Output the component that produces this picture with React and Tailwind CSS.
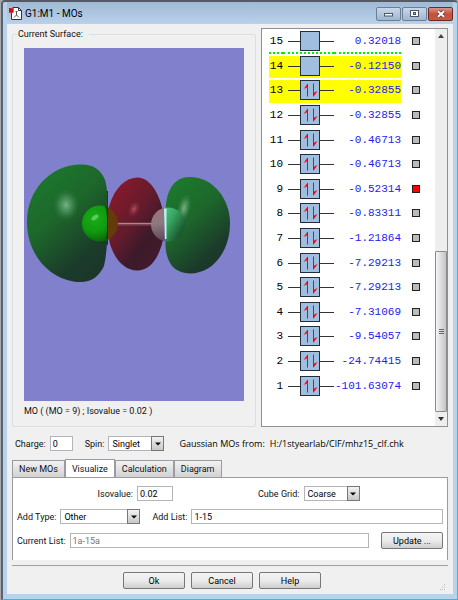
import { useState } from 'react';

const orbitals = [
    { id: 15, energy: '0.32018', electrons: 0, lastVirtual: true },
    { id: 14, energy: '-0.12150', electrons: 0, highlighted: true },
    { id: 13, energy: '-0.32855', electrons: 2, highlighted: true },
    { id: 12, energy: '-0.32855', electrons: 2 },
    { id: 11, energy: '-0.46713', electrons: 2 },
    { id: 10, energy: '-0.46713', electrons: 2 },
    { id: 9, energy: '-0.52314', electrons: 2 },
    { id: 8, energy: '-0.83311', electrons: 2 },
    { id: 7, energy: '-1.21864', electrons: 2 },
    { id: 6, energy: '-7.29213', electrons: 2 },
    { id: 5, energy: '-7.29213', electrons: 2 },
    { id: 4, energy: '-7.31069', electrons: 2 },
    { id: 3, energy: '-9.54057', electrons: 2 },
    { id: 2, energy: '-24.74415', electrons: 2 },
    { id: 1, energy: '-101.63074', electrons: 2 },
];

const tabs = ['New MOs', 'Visualize', 'Calculation', 'Diagram'];

function AppIcon() {
    return (
        <svg className="h-[13px] w-[13px] shrink-0" viewBox="0 0 13 13">
            <path d="M3.5 0.5H9.500L12.500 3.500V12.500H2.500V6" fill="#fff" stroke="#333" strokeWidth="1" />
            <path d="M9.500 0.500V3.500H12.500" fill="none" stroke="#333" strokeWidth="1" />
            <path d="M7.500 4V8L5 10.500M7.500 8L10 10.500M6.500 4.500H8.500" fill="none" stroke="#555" strokeWidth="1" />
            <rect x="0.250" y="1.500" width="4" height="4" fill="#e00" stroke="#a00" strokeWidth="0.500" />
        </svg>
    );
}

function TitleBar() {
    return (
        <header className="flex h-[22px] items-center justify-between bg-linear-to-b from-[#a0bad6] to-[#b9d1ea] pt-px pl-[2px]">
            <div className="flex items-center gap-[3px]">
                <AppIcon />
                <h1 className="text-[10px] leading-4 text-black">G1:M1 - MOs</h1>
            </div>
            <div className="flex gap-px">
                <button type="button" aria-label="Minimize" className="flex h-[14px] w-[25px] items-center justify-center rounded-[2px] border border-[#6d7f95] bg-linear-to-b from-[#c8d8ea] to-[#9fb6d0]">
                    <svg className="h-[7px] w-[11px]" viewBox="0 0 11 7">
                        <rect x="1.5" y="3.5" width="8" height="2.5" fill="#fff" stroke="#4c5666" />
                    </svg>
                </button>
                <button type="button" aria-label="Maximize" className="flex h-[14px] w-[25px] items-center justify-center rounded-[2px] border border-[#6d7f95] bg-linear-to-b from-[#c8d8ea] to-[#9fb6d0]">
                    <svg className="h-[7px] w-[11px]" viewBox="0 0 11 7">
                        <rect x="1.5" y="0.5" width="8" height="6" fill="#fff" stroke="#4c5666" />
                        <rect x="4.5" y="2.5" width="2" height="2" fill="#9fb6d0" stroke="#4c5666" />
                    </svg>
                </button>
                <button type="button" aria-label="Close" className="flex h-[14px] w-[25px] items-center justify-center rounded-[2px] border border-[#6b2a22] bg-linear-to-b from-[#d9968a] via-[#c4503c] to-[#c65a44]">
                    <svg className="h-[8px] w-[10px]" viewBox="0 0 10 8">
                        <path d="M2 1.2L8 6.8M8 1.2L2 6.8" stroke="#5a3a3a" strokeWidth="3.4" />
                        <path d="M2 1.2L8 6.8M8 1.2L2 6.8" stroke="#fff" strokeWidth="1.9" />
                    </svg>
                </button>
            </div>
        </header>
    );
}

function Surface() {
    return (
        <svg className="h-[353px] w-full" viewBox="24 48 220 353" preserveAspectRatio="xMidYMid slice" role="img" aria-label="Molecular orbital surface">
            <defs>
                <linearGradient id="green" x1="0.2" y1="0" x2="0.8" y2="1">
                    <stop offset="0" stopColor="#1c7a2c" />
                    <stop offset="0.4" stopColor="#1d672b" />
                    <stop offset="0.8" stopColor="#1b3b2a" />
                    <stop offset="1" stopColor="#1b352b" />
                </linearGradient>
                <linearGradient id="red" x1="0.15" y1="0.1" x2="0.8" y2="0.9">
                    <stop offset="0" stopColor="#86192b" />
                    <stop offset="0.45" stopColor="#631b2d" />
                    <stop offset="0.75" stopColor="#3b1a2a" />
                    <stop offset="1" stopColor="#421a2b" />
                </linearGradient>
                <radialGradient id="shine">
                    <stop offset="0" stopColor="#78b788" stopOpacity="0.95" />
                    <stop offset="0.5" stopColor="#559866" stopOpacity="0.6" />
                    <stop offset="1" stopColor="#2b7a3a" stopOpacity="0" />
                </radialGradient>
                <radialGradient id="redShine">
                    <stop offset="0" stopColor="#b3505f" />
                    <stop offset="1" stopColor="#7a2434" stopOpacity="0" />
                </radialGradient>
                <radialGradient id="chlorine" cx="0.35" cy="0.35" r="0.75">
                    <stop offset="0" stopColor="#18ae18" />
                    <stop offset="0.5" stopColor="#109a10" />
                    <stop offset="1" stopColor="#075a09" />
                </radialGradient>
                <linearGradient id="fluorineRight" x1="0" y1="0.2" x2="1" y2="0.8">
                    <stop offset="0" stopColor="#61d894" />
                    <stop offset="0.5" stopColor="#39a562" />
                    <stop offset="0.85" stopColor="#1d5f33" />
                    <stop offset="1" stopColor="#1b4f2d" />
                </linearGradient>
                <linearGradient id="fluorineLeft" x1="0" y1="0" x2="0.2" y2="1">
                    <stop offset="0" stopColor="#9b747c" />
                    <stop offset="0.5" stopColor="#8f7780" />
                    <stop offset="1" stopColor="#5e4856" />
                </linearGradient>
                <clipPath id="leftOfNode"><rect x="24" y="48" width="84" height="353" /></clipPath>
                <clipPath id="rightOfNode"><rect x="108" y="48" width="20" height="353" /></clipPath>
                <clipPath id="leftOfLobe"><rect x="140" y="48" width="24.5" height="353" /></clipPath>
                <clipPath id="rightOfLobe"><rect x="165.5" y="48" width="40" height="353" /></clipPath>
            </defs>
            <rect x="24" y="48" width="220" height="353" fill="#8080cc" />
            <path d="M79 164.5C92 163.5 101 169 105 180C107 187 107.5 193 107.5 204V232C107 248 106 257 104 266C99 277 90 283 78 282C50 280 27 255 27 222C27 190 50 166 79 164.5Z" fill="url(#green)" />
            <ellipse cx="66" cy="205" rx="13" ry="16" fill="url(#shine)" />
            <path d="M137 177.500C149 177 159 192 163 211L164 223C164 234 163 242 161 247C156 263 147 270.500 137 270.500C125 270.500 115 260 110 244C108 236 107.500 211 109.500 205C115 188 125 178 137 177.500Z" fill="url(#red)" />
            <ellipse cx="134" cy="209" rx="6" ry="9" fill="url(#redShine)" transform="rotate(25 134 209)" />
            <path d="M190 177C213 177 230 199 230 223C230 251 213 273.500 190 273.500C174 273 166.500 263 165.500 246V211C166 190 174 177 190 177Z" fill="url(#green)" />
            <ellipse cx="184" cy="208" rx="7" ry="15" fill="url(#shine)" transform="rotate(14 184 208)" />
            <rect x="117" y="222.500" width="36" height="3" fill="#7d464e" />
            <rect x="117" y="223" width="36" height="1" fill="#b78486" />
            <circle cx="100" cy="223.500" r="18" fill="url(#chlorine)" clipPath="url(#leftOfNode)" />
            <circle cx="100" cy="223.500" r="18" fill="#663b0b" clipPath="url(#rightOfNode)" />
            <path d="M104.500 206C108 212 108 235 105 241L108 240V206Z" fill="#0a5a0c" />
            <ellipse cx="95" cy="217.500" rx="4" ry="2" fill="#7fd67b" opacity="0.7" transform="rotate(-35 95 217.500)" />
            <circle cx="168" cy="224.500" r="17" fill="url(#fluorineLeft)" clipPath="url(#leftOfLobe)" />
            <circle cx="168" cy="224.500" r="17" fill="url(#fluorineRight)" clipPath="url(#rightOfLobe)" />
            <path d="M164 208.500H166.500V239H165Z" fill="#b9f5ee" />
            <path d="M107.500 191V245" stroke="#123f1c" strokeWidth="1" />
        </svg>
    );
}

function OrbitalBox({ electrons }) {
    return (
        <svg className="block h-5 w-[46px]" viewBox="0 0 46 20" aria-hidden="true">
            <path d="M0 10.500H46" stroke="#333" strokeWidth="1" />
            <rect x="12.500" y="0.500" width="19" height="19" fill="#9fbee0" stroke="#222d3a" />
            {electrons === 2 && (
                <g stroke="#f00" fill="#f00">
                    <path d="M19.500 16.500V4" fill="none" />
                    <path d="M19.800 3.500V7L15.500 9Z" stroke="none" />
                    <path d="M25.500 3.500V16" fill="none" />
                    <path d="M25.200 17V13L29.500 11Z" stroke="none" />
                </g>
            )}
        </svg>
    );
}

function OrbitalTable({ selected, onToggle }) {
    return (
        <table className="h-[371px] flex-1 border-separate border-spacing-x-0 border-spacing-y-[2px] font-['Liberation_Mono',monospace] text-[11px] leading-4">
            <tbody>
                {orbitals.map(orbital => {
                    const cell = orbital.highlighted
                        ? 'border-b-2 border-[#ffff00] bg-[#ffff00]'
                        : orbital.lastVirtual ? 'border-b-2 border-dotted border-[#00ee00]' : 'border-b-2 border-transparent';
                    return (
                        <tr key={orbital.id}>
                            <td className={`w-[14px] p-0 text-right text-black ${cell}`}>{orbital.id}</td>
                            <td className={`w-[51px] p-0 pl-[5px] ${cell}`}>
                                <OrbitalBox electrons={orbital.electrons} />
                            </td>
                            <td className={`p-0 text-right text-[#2222ee] ${cell}`}>{orbital.energy}</td>
                            <td className="w-[34px] border-b-2 border-transparent p-0 pl-[11px]">
                                <input
                                    type="checkbox"
                                    aria-label={`Select orbital ${orbital.id}`}
                                    className="block h-2 w-2 appearance-none border border-[#222] bg-[#bbb] checked:bg-[#f00]"
                                    checked={selected === orbital.id}
                                    onChange={() => onToggle(orbital.id)}
                                />
                            </td>
                        </tr>
                    );
                })}
            </tbody>
        </table>
    );
}

function ScrollBar() {
    return (
        <div className="flex w-3 shrink-0 flex-col bg-[#eeeeee]">
            <button type="button" aria-label="Scroll up" className="flex h-[14px] items-center justify-center">
                <svg className="h-1 w-[6px]" viewBox="0 0 6 4"><path d="M0 4L3 0L6 4Z" fill="#444" /></svg>
            </button>
            <div className="flex-1" />
            <div className="flex h-[161px] flex-col items-center justify-center gap-px rounded-[1px] border border-[#8c8c8c] bg-linear-to-r from-[#f5f5f5] to-[#c4c4c8]">
                <span className="h-px w-[5px] bg-[#666]" />
                <span className="h-px w-[5px] bg-[#666]" />
                <span className="h-px w-[5px] bg-[#666]" />
            </div>
            <button type="button" aria-label="Scroll down" className="flex h-[14px] items-center justify-center">
                <svg className="h-1 w-[6px]" viewBox="0 0 6 4"><path d="M0 0L3 4L6 0Z" fill="#333" /></svg>
            </button>
        </div>
    );
}

function SelectInput({ id, className, value, onChange, options }) {
    return (
        <div className={`relative h-[15px] ${className}`}>
            <select
                id={id}
                value={value}
                onChange={onChange}
                className="block h-full w-full appearance-none border border-[#b4b4bc] bg-white pr-3 pl-[3px] leading-3 text-black"
            >
                {options.map(option => <option key={option}>{option}</option>)}
            </select>
            <span className="pointer-events-none absolute top-0 right-0 flex h-full w-[13px] items-center justify-center border border-[#777] bg-linear-to-b from-[#f2f2f2] to-[#c8c8c8]">
                <svg className="h-1 w-[6px]" viewBox="0 0 6 4"><path d="M0 0.500L3 3.500L6 0.500Z" fill="#000" /></svg>
            </span>
        </div>
    );
}

function TextInput({ className, ...props }) {
    return <input type="text" className={`h-[15px] border border-[#b4b4bc] bg-white px-[2px] leading-3 text-black disabled:text-[#777] ${className}`} {...props} />;
}

function PushButton({ children }) {
    return (
        <button type="button" className="h-[17px] w-[62px] shrink-0 rounded-[2px] border border-[#777] bg-linear-to-b from-[#f4f4f4] via-[#ebebeb] to-[#cfcfcf] leading-3 text-black">
            {children}
        </button>
    );
}

export default function App() {
    const [selected, setSelected] = useState(9);
    const [activeTab, setActiveTab] = useState('Visualize');
    const [charge, setCharge] = useState('0');
    const [spin, setSpin] = useState('Singlet');
    const [isovalue, setIsovalue] = useState('0.02');
    const [cubeGrid, setCubeGrid] = useState('Coarse');
    const [addType, setAddType] = useState('Other');
    const [addList, setAddList] = useState('1-15');

    return (
        <div className="flex min-h-screen bg-[#a5a9ad] pl-px font-['Roboto','Liberation_Sans',sans-serif] text-[9px] leading-3 text-[#111]">
            <div className="flex min-w-0 flex-1 flex-col rounded-t-[4px] border-t-2 border-r border-b border-l-2 border-t-[#555b62] border-r-[#32bfd4] border-b-[#32bfd4] border-l-[#59636d] bg-[#b9d1ea] px-1 pb-[5px]">
                <TitleBar />
                <main className="flex flex-1 flex-col bg-[#f0f0f0] px-[5px] pt-1">
                    <div className="flex gap-[5px]">
                        <fieldset className="min-w-0 flex-1 rounded-[2px] border border-[#d8e0e6] px-[11px] pb-[9px]">
                            <legend className="-ml-[6px] pr-[6px]">Current Surface:</legend>
                            <div className="pt-2">
                                <Surface />
                            </div>
                            <p className="pt-1">MO ( (MO = 9) ; Isovalue = 0.02 )</p>
                        </fieldset>
                        <section className="flex w-[187px] shrink-0 border border-[#8e8f98] bg-white pl-[7px]">
                            <OrbitalTable selected={selected} onToggle={setSelected} />
                            <ScrollBar />
                        </section>
                    </div>

                    <div className="mt-[9px] flex items-center px-[3px]">
                        <label htmlFor="charge">Charge:</label>
                        <TextInput id="charge" className="ml-1 w-[23px]" value={charge} onChange={e => setCharge(e.target.value)} />
                        <label htmlFor="spin" className="ml-3">Spin:</label>
                        <SelectInput id="spin" className="ml-1 w-14" value={spin} onChange={e => setSpin(e.target.value)} options={['Singlet', 'Triplet']} />
                        <p className="ml-[15px] flex gap-[5px] font-['Open_Sans',sans-serif] text-black">
                            <span>Gaussian MOs from:</span>
                            <span>H:/1styearlab/ClF/mhz15_clf.chk</span>
                        </p>
                    </div>

                    <div className="mt-2 flex h-[18px] items-end" role="tablist">
                        {tabs.map(tab => (
                            <button
                                key={tab}
                                type="button"
                                role="tab"
                                aria-selected={activeTab === tab}
                                className={activeTab === tab
                                    ? 'h-[18px] border border-b-0 border-[#9a9ca4] bg-white px-[6px]'
                                    : 'h-[17px] border border-b-0 border-[#9a9ca4] bg-linear-to-b from-[#f2f2f2] to-[#d2d2d2] px-[6px]'}
                                onClick={() => setActiveTab(tab)}
                            >
                                {tab}
                            </button>
                        ))}
                    </div>
                    <section className="flex flex-col gap-2 border border-b-0 border-[#9a9ca4] bg-white px-1 pt-2 pb-[11px]">
                        <div className="flex items-center">
                            <label htmlFor="isovalue" className="w-[116px] text-right">Isovalue:</label>
                            <TextInput id="isovalue" className="ml-1 w-9" value={isovalue} onChange={e => setIsovalue(e.target.value)} />
                            <label htmlFor="cube-grid" className="ml-[85px]">Cube Grid:</label>
                            <SelectInput id="cube-grid" className="ml-1 w-14" value={cubeGrid} onChange={e => setCubeGrid(e.target.value)} options={['Coarse', 'Medium', 'Fine']} />
                        </div>
                        <div className="flex items-center">
                            <label htmlFor="add-type">Add Type:</label>
                            <SelectInput id="add-type" className="ml-1 w-20" value={addType} onChange={e => setAddType(e.target.value)} options={['Other', 'HOMO', 'LUMO']} />
                            <label htmlFor="add-list" className="ml-3">Add List:</label>
                            <TextInput id="add-list" className="ml-1 min-w-0 flex-1" value={addList} onChange={e => setAddList(e.target.value)} />
                        </div>
                        <div className="flex items-center">
                            <label htmlFor="current-list">Current List:</label>
                            <TextInput id="current-list" className="mr-3 ml-1 min-w-0 flex-1" value="1a-15a" disabled />
                            <PushButton>Update ...</PushButton>
                        </div>
                    </section>

                    <footer className="mt-[5px] border-t border-[#a0a0a0] pt-[6px]">
                        <div className="relative flex justify-center gap-[6px] pr-4 pb-1">
                            <PushButton>Ok</PushButton>
                            <PushButton>Cancel</PushButton>
                            <PushButton>Help</PushButton>
                            <svg className="absolute right-[2px] bottom-[2px] h-[7px] w-[7px]" viewBox="0 0 7 7" fill="#bbb">
                                <path d="M5 0h1v1H5zM3 2.500h1v1H3zM5 2.500h1v1H5zM1 5h1v1H1zM3 5h1v1H3zM5 5h1v1H5z" />
                            </svg>
                        </div>
                    </footer>
                </main>
            </div>
        </div>
    );
}
